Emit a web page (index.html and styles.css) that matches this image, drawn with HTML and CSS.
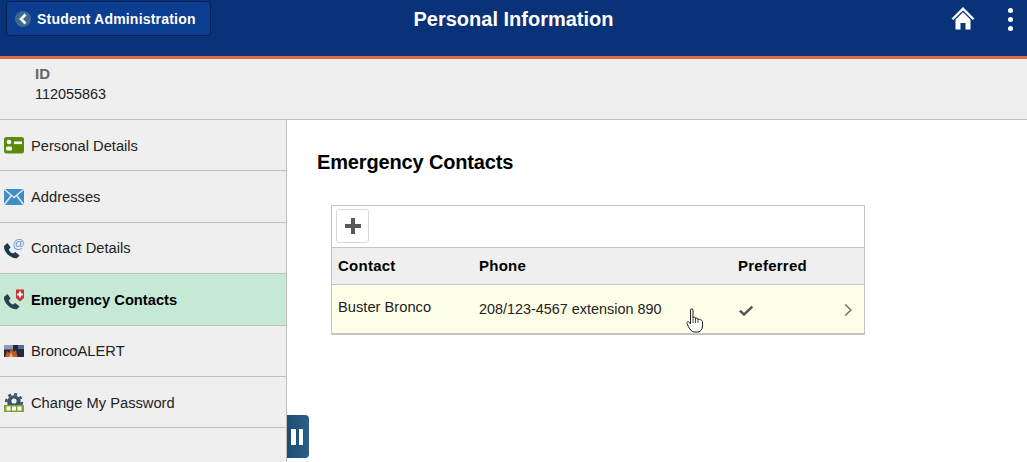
FILE: index.html
```html
<!DOCTYPE html>
<html lang="en">
<head>
  <meta charset="UTF-8">
  <title>Personal Information</title>
  <link rel="stylesheet" href="styles.css">
</head>
<body>
  <!-- Banner -->
  <div class="banner">
    <div class="banner-left">
      <div class="back-btn">
        <span class="back-circle">
          <svg width="10" height="12" viewBox="0 0 10 12"><path d="M7.5 1.5 L3 6 L7.5 10.5" fill="none" stroke="#fff" stroke-width="2.6"/></svg>
        </span>
        <span>Student Administration</span>
      </div>
    </div>
    <h1 class="banner-title">Personal Information</h1>
    <div class="banner-right">
      <svg class="home-icon" width="24" height="24" viewBox="0 0 24 24">
        <path d="M12 1 L0.5 12.5 L2.2 14 L12 4.4 L21.8 14 L23.5 12.5 Z" fill="#fff"/>
        <path d="M4.5 13.5 L12 6.3 L19.5 13.5 V23.5 H14.5 V17 H9.5 V23.5 H4.5 Z" fill="#fff"/>
      </svg>
      <div class="dots"><i></i><i></i><i></i></div>
    </div>
  </div>

  <!-- Student id -->
  <div class="id-bar">
    <div class="id-label">ID</div>
    <div class="id-value">112055863</div>
  </div>

  <div class="content">
    <!-- Side menu -->
    <ul class="side-menu">
      <li>
        <svg width="22" height="18" viewBox="0 0 22 18">
          <rect x="1" y="1" width="20" height="16.5" rx="2.5" fill="#5a8a0a"/>
          <circle cx="6" cy="6" r="2.3" fill="#fff"/>
          <rect x="3" y="10.5" width="6" height="4" rx="1.5" fill="#fff"/>
          <rect x="11" y="5.5" width="8" height="2.6" fill="#fff"/>
        </svg>
        <span>Personal Details</span>
      </li>
      <li>
        <svg width="22" height="18" viewBox="0 0 22 18">
          <rect x="1" y="1" width="20" height="16" fill="#3f8fc4"/>
          <path d="M1 1 L11 9.5 L21 1 M1 17 L8.4 7.5 M21 17 L13.6 7.5" fill="none" stroke="#dbeaf5" stroke-width="1.5"/>
        </svg>
        <span>Addresses</span>
      </li>
      <li>
        <svg width="22" height="22" viewBox="0 0 22 22">
          <path d="M1 9 L4.4 6 L7.6 10.2 L5.8 12.4 C6.6 14.4 8.2 16 10.2 16.6 L12.2 15 L16.6 18.4 L13.8 21.2 C8 21.8 0.4 15 1 9 Z" fill="#1f3a4a"/>
          <text class="at-sign" x="9.5" y="11">@</text>
        </svg>
        <span>Contact Details</span>
      </li>
      <li class="active">
        <svg width="22" height="22" viewBox="0 0 22 22">
          <path d="M1 9 L4.4 6 L7.6 10.2 L5.8 12.4 C6.6 14.4 8.2 16 10.2 16.6 L12.2 15 L16.6 18.4 L13.8 21.2 C8 21.8 0.4 15 1 9 Z" fill="#26424f"/>
          <path d="M13 1.5 H21 V10 L17 13.5 L13 10 Z" fill="#c8343a"/>
          <path d="M16.1 3.5 H17.9 V5.6 H19.8 V7.4 H17.9 V9.5 H16.1 V7.4 H14.2 V5.6 H16.1 Z" fill="#fff"/>
        </svg>
        <span>Emergency Contacts</span>
      </li>
      <li>
        <svg width="22" height="14" viewBox="0 0 22 14">
          <rect x="1" y="1" width="20" height="12" fill="#232a3a"/>
          <rect x="1" y="1" width="9" height="4.5" fill="#8f9cb5"/>
          <rect x="15" y="1" width="6" height="4" fill="#4f6ca8"/>
          <path d="M2 13 L4 7 L6 9 L8.5 4 L11 8 L13 6 L14.5 13 Z" fill="#bb5a2a"/>
          <path d="M6 13 L8 8 L10 13 Z" fill="#e8b04a"/>
        </svg>
        <span>BroncoALERT</span>
      </li>
      <li>
        <svg width="22" height="24" viewBox="0 0 22 24">
          <circle cx="11" cy="12" r="6.8" fill="#3c5468"/>
          <circle class="gear-teeth" cx="11" cy="12" r="7.8"/>
          <circle cx="11" cy="11" r="2.6" fill="#efefef"/>
          <rect x="1" y="15" width="20" height="7" fill="#7fa23a"/>
          <rect x="3.5" y="16.5" width="4" height="4" fill="#fff"/>
          <rect x="9" y="16.5" width="4" height="4" fill="#fff"/>
          <rect x="14.5" y="16.5" width="4" height="4" fill="#fff"/>
        </svg>
        <span>Change My Password</span>
      </li>
    </ul>

    <!-- Main panel -->
    <div class="main">
      <h2 class="page-title">Emergency Contacts</h2>
      <div class="grid">
        <div class="toolbar">
          <div class="add-btn">
            <svg width="16" height="16" viewBox="0 0 16 16"><path d="M6 0 H10 V6 H16 V10 H10 V16 H6 V10 H0 V6 H6 Z" fill="#585858"/></svg>
          </div>
        </div>
        <div class="grid-row grid-head">
          <div class="col-contact">Contact</div>
          <div class="col-phone">Phone</div>
          <div class="col-pref">Preferred</div>
        </div>
        <div class="grid-row grid-data">
          <div class="col-contact name-cell">Buster Bronco</div>
          <div class="col-phone">208/123-4567 extension 890</div>
          <div class="col-pref check-cell">
            <svg width="16" height="12" viewBox="0 0 16 12"><path d="M1 6.5 L2.8 4.8 L6 7.8 L13.4 0.8 L15.2 2.5 L6 11.2 Z" fill="#585858"/></svg>
          </div>
          <svg class="chevron" width="9" height="14" viewBox="0 0 9 14"><path d="M1.2 1.5 L7 7 L1.2 12.5" fill="none" stroke="#6a6a6a" stroke-width="1.4"/></svg>
        </div>
      </div>
    </div>
  </div>

  <!-- Collapse handle -->
  <div class="pause-tab"><i></i><i></i></div>

  <!-- Mouse pointer in the screenshot -->
  <svg class="hand-cursor" width="18" height="25" viewBox="0 0 18 25">
    <path d="M4.5 2 C4.5 0.5 7 0.5 7 2 V10 C7 8.8 9.5 8.8 9.5 10 V11 C9.5 9.8 12 9.8 12 11 V12 C12 10.8 14.5 10.8 14.5 12 C16 12 16.5 13 16.5 14 V18 C16.5 21 15 23.5 12 24 H8 C5.5 23.5 4 21.5 2.5 19 L1 15.5 C0.5 14 2.5 13 3.5 14.5 L4.5 16 Z" fill="#fff" stroke="#222" stroke-width="1"/>
    <path d="M7 10 V15 M9.5 11 V15 M12 12 V15" stroke="#222" stroke-width="0.8" fill="none"/>
  </svg>
</body>
</html>
```

FILE: styles.css
```css
html, body {
  margin: 0;
  padding: 0;
  height: 100%;
  overflow: hidden;
}
body {
  font-family: 'Liberation Sans', Arial, sans-serif;
  font-size: 14px;
  color: #000;
  background: #fff;
  position: relative;
}
.banner {
  height: 56px;
  background: #0a3278;
  border-bottom: 3px solid #e0693f;
  display: flex;
  align-items: flex-start;
  color: #fff;
}
.banner-left, .banner-right {
  flex: 1;
  display: flex;
}
.banner-left {
  padding-left: 6px;
}
.banner-right {
  justify-content: flex-end;
  padding: 6px 14px 0 0;
  gap: 33px;
}
.back-btn {
  width: 195px;
  height: 33px;
  margin-top: 1px;
  background: #0b3d91;
  border: 1px solid #062255;
  border-radius: 4px;
  display: flex;
  align-items: center;
  gap: 6px;
  padding-left: 8px;
  font-size: 14px;
  font-weight: bold;
  letter-spacing: 0.2px;
}
.back-circle {
  width: 16px;
  height: 16px;
  border-radius: 50%;
  background: #3d6a91;
  display: flex;
  align-items: center;
  justify-content: center;
}
.banner-title {
  margin: 7px 0 0 8px;
  font-size: 20px;
  line-height: 24px;
  font-weight: bold;
}
.dots {
  display: flex;
  flex-direction: column;
  gap: 4px;
  padding-top: 2px;
}
.dots i {
  width: 5px;
  height: 5px;
  border-radius: 50%;
  background: #fff;
}
.id-bar {
  height: 60px;
  background: #efefef;
  border-bottom: 1px solid #bfbfbf;
  padding-left: 35px;
}
.id-label {
  padding-top: 6px;
  font-size: 15px;
  font-weight: bold;
  color: #666;
  line-height: 18px;
}
.id-value {
  font-size: 14.4px;
  line-height: 22px;
  color: #222;
}
.content {
  display: flex;
  height: 342px;
}
.side-menu {
  width: 286px;
  margin: 0;
  padding: 0;
  list-style: none;
  background: #efefef;
  border-right: 1px solid #bfbfbf;
  font-size: 14.7px;
}
.side-menu li {
  height: 50.4px;
  border-bottom: 1px solid #bfbfbf;
  display: flex;
  align-items: center;
  padding-left: 3px;
  color: #222;
}
.side-menu li span {
  padding-top: 1px;
}
.side-menu li svg {
  width: 22px;
  flex-shrink: 0;
  margin-right: 6px;
}
.side-menu li.active {
  background: #c6e9d6;
  font-weight: bold;
  color: #000;
}
.at-sign {
  font-family: 'Liberation Sans', Arial, sans-serif;
  font-size: 12px;
  font-weight: normal;
  fill: #5f9fd2;
}
.gear-teeth {
  fill: none;
  stroke: #3c5468;
  stroke-width: 2.6;
  stroke-dasharray: 3 3.1;
}
.main {
  flex: 1;
  padding-left: 30px;
}
.page-title {
  margin: 0;
  padding-top: 30px;
  font-size: 20px;
  line-height: 24px;
  font-weight: bold;
  letter-spacing: -0.15px;
}
.grid {
  width: 532px;
  margin: 31px 0 0 14px;
  border: 1px solid #c4c4c4;
  border-bottom-width: 2px;
}
.toolbar {
  height: 42px;
  padding: 3px 0 0 4px;
  box-sizing: border-box;
  border-bottom: 1px solid #c4c4c4;
}
.add-btn {
  width: 31px;
  height: 32px;
  border: 1px solid #d8d8d8;
  border-radius: 3px;
  background: #fff;
  display: flex;
  align-items: center;
  justify-content: center;
}
.grid-row {
  display: flex;
  position: relative;
  align-items: center;
  padding-left: 6px;
}
.grid-head {
  height: 34px;
  padding-bottom: 2px;
  background: #efefef;
  border-bottom: 1px solid #c4c4c4;
  font-size: 15px;
  font-weight: bold;
  letter-spacing: 0.25px;
}
.grid-data {
  height: 48px;
  background: #ffffe9;
  color: #222;
  font-size: 14.4px;
}
.col-contact {
  width: 141px;
}
.col-phone {
  width: 259px;
}
.col-pref {
  display: flex;
  align-items: center;
}
.name-cell {
  margin-top: -5px;
  font-size: 14.7px;
}
.check-cell {
  margin-top: 4px;
}
.chevron {
  position: absolute;
  right: 11px;
  top: 18px;
}
.pause-tab {
  position: absolute;
  left: 287px;
  top: 415px;
  width: 20px;
  height: 43px;
  padding-right: 2px;
  background: linear-gradient(to right, #1c4a72, #2c6088);
  border-radius: 0 4px 4px 0;
  display: flex;
  align-items: center;
  justify-content: center;
  gap: 3px;
}
.pause-tab i {
  width: 4.5px;
  height: 16px;
  background: #fff;
}
.hand-cursor {
  position: absolute;
  left: 686px;
  top: 308px;
}
```
